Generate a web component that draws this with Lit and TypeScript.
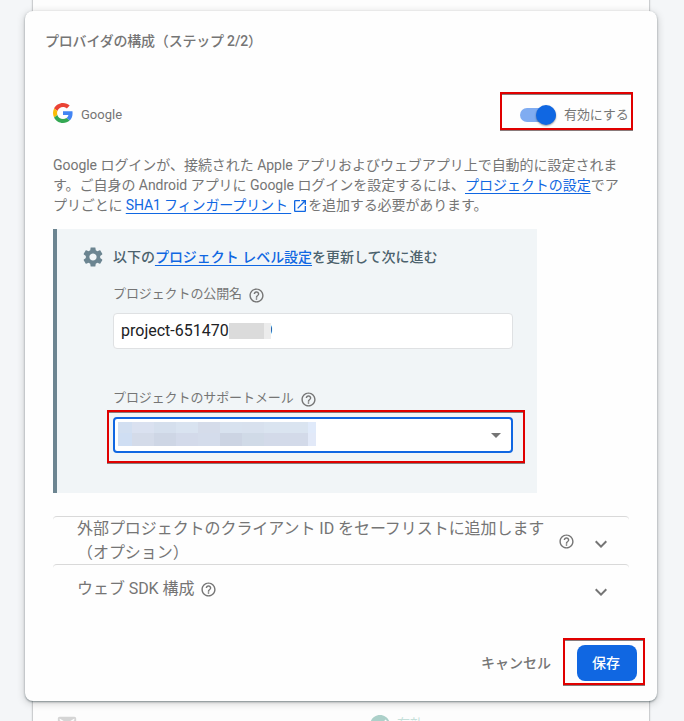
import { LitElement, html, css } from "lit";
import { customElement, property } from "lit/decorators.js";

const ICONS: Record<string, string> = {
  help: "M11 18h2v-2h-2v2zm1-16C6.48 2 2 6.48 2 12s4.48 10 10 10 10-4.48 10-10S17.52 2 12 2zm0 18c-4.41 0-8-3.59-8-8s3.59-8 8-8 8 3.59 8 8-3.59 8-8 8zm0-14c-2.21 0-4 1.79-4 4h2c0-1.1.9-2 2-2s2 .9 2 2c0 2-3 1.75-3 5h2c0-2.25 3-2.5 3-5 0-2.21-1.79-4-4-4z",
  gear: "M19.14 12.94c.04-.3.06-.61.06-.94 0-.32-.02-.64-.07-.94l2.03-1.58c.18-.14.23-.41.12-.61l-1.92-3.32c-.12-.22-.37-.29-.59-.22l-2.39.96c-.5-.38-1.03-.7-1.62-.94l-.36-2.54c-.04-.24-.24-.41-.48-.41h-3.84c-.24 0-.43.17-.47.41l-.36 2.54c-.59.24-1.13.57-1.62.94l-2.39-.96c-.22-.08-.47 0-.59.22L2.74 8.87c-.12.21-.08.47.12.61l2.03 1.58c-.05.3-.09.63-.09.94s.02.64.07.94l-2.03 1.58c-.18.14-.23.41-.12.61l1.92 3.32c.12.22.37.29.59.22l2.39-.96c.5.38 1.03.7 1.62.94l.36 2.54c.05.24.24.41.48.41h3.84c.24 0 .44-.17.47-.41l.36-2.54c.59-.24 1.13-.56 1.62-.94l2.39.96c.22.08.47 0 .59-.22l1.92-3.32c.12-.22.07-.47-.12-.61l-2.01-1.58zM12 15.6c-1.98 0-3.6-1.62-3.6-3.6s1.62-3.6 3.6-3.6 3.6 1.62 3.6 3.6-1.62 3.6-3.6 3.6z",
  open: "M19 19H5V5h7V3H5c-1.11 0-2 .9-2 2v14c0 1.1.89 2 2 2h14c1.1 0 2-.9 2-2v-7h-2v7zM14 3v2h3.59l-9.83 9.83 1.41 1.41L19 6.41V10h2V3h-7z",
  drop: "M7 10l5 5 5-5z",
  expand: "M7.41 8.59 12 13.17l4.59-4.58L18 10l-6 6-6-6z",
  mail: "M20 4H4c-1.1 0-1.99.9-1.99 2L2 18c0 1.1.9 2 2 2h16c1.1 0 2-.9 2-2V6c0-1.1-.9-2-2-2zm0 4l-8 5-8-5V6l8 5 8-5v2z",
  check: "M12 2C6.48 2 2 6.48 2 12s4.48 10 10 10 10-4.48 10-10S17.52 2 12 2zm-2 15l-5-5 1.41-1.41L10 14.17l7.59-7.59L19 8l-9 9z",
};

@customElement("ui-icon")
export class UiIcon extends LitElement {
  @property() name = "help";
  static styles = css`
    :host { display: inline-block; width: 17px; height: 17px; flex: none; }
    svg { display: block; width: 100%; height: 100%; fill: currentColor; }
  `;
  render() {
    return html`<svg viewBox="0 0 24 24"><path d=${ICONS[this.name]}></path></svg>`;
  }
}

const MOSAIC = [
  ["#d2dff1", "#dae1f0", "#d5dfed", "#d9e3f0", "#d5dcea", "#d8e2ef", "#d8e1ee", "#dae4f0", "#dae4f0", "#e0eafa"],
  ["#cfdef3", "#d4dbe9", "#ced6e5", "#d3daea", "#d4dceb", "#ccd4e3", "#d0dae7", "#d3dae9", "#d3dae9", "#e2e9f8"],
];

@customElement("app-root")
export class AppRoot extends LitElement {
  static styles = css`
    :host {
      display: block; position: relative; width: 684px; height: 721px; overflow: hidden;
      box-sizing: border-box; padding: 11px 0 0 25px; background: #f4f6f8; color: #757575;
      font: 14px/20px Roboto, "Noto Sans CJK JP", sans-serif;
    }
    * { box-sizing: border-box; }
    .page {
      position: absolute; left: 33px; top: -30px; width: 616px; height: 790px;
      background: #fdfdfd; box-shadow: 0 0 2px rgba(0, 0, 0, .5); color: #c6c6c6;
      display: flex; flex-direction: column; justify-content: space-between;
      padding: 13px 0 25px 25px; font-size: 13px;
    }
    .cols { display: grid; grid-template-columns: 310px 1fr; height: 20px; }
    .bottom { height: 24px; align-items: center; }
    .mail { width: 22px; height: 22px; margin-left: -2px; color: #d5d5d5; }
    .status { display: flex; align-items: center; gap: 5px; color: #acd0c9; }
    .status ui-icon { width: 24px; height: 24px; margin-top: 2px; }
    .status-label { color: #c4dfd9; }
    .dialog {
      position: relative; width: 632px; height: 690px; background: #fefefe; border-radius: 8px;
      box-shadow: 0 1px 2px rgba(40, 60, 65, .5), 0 2px 8px rgba(0, 0, 0, .2);
      padding: 20px 28px 0; display: flex; flex-direction: column;
    }
    .title { margin: 0 0 0 -8px; font-size: 14px; line-height: 20px; font-weight: 500; letter-spacing: -.2px; white-space: nowrap; }
    .provider { display: flex; align-items: center; height: 38px; margin-top: 41px; }
    .logo { width: 20px; height: 20px; margin-top: 3px; }
    .provider-name { margin: 7px 0 0 8px; font-size: 13px; }
    .mark { position: relative; }
    .mark::after {
      content: ""; position: absolute; inset: var(--inset, 0); border: 2px solid #e00000;
      filter: drop-shadow(0 1px 0 #8a7a7a); pointer-events: none;
    }
    .enable { display: flex; align-items: center; width: 133px; height: 38px; margin-left: auto; padding: 7px 0 0 20px; margin-right: -4px; white-space: nowrap; font-size: 13px; letter-spacing: -.1px; }
    .toggle { width: 36px; height: 14px; border-radius: 7px; background: #80acf1; margin-right: 8px; display: flex; align-items: center; justify-content: flex-end; }
    .knob { width: 20px; height: 20px; border-radius: 50%; background: #1067e2; box-shadow: 0 1px 2px rgba(0, 0, 0, .4); flex: none; }
    .desc { margin-top: 25px; white-space: nowrap; font-size: 14px; line-height: 20px; height: 60px; letter-spacing: -.035px; }
    .desc div { height: 20px; }
    .link { color: #1067e2; text-decoration: underline; text-underline-offset: 3px; text-decoration-thickness: 1px; }
    .desc .tight { letter-spacing: -.12px; }
    .desc ui-icon { width: 16px; height: 16px; color: #1067e2; vertical-align: -4px; margin: 0 0 0 1px; }
    .panel { width: 484px; height: 264px; margin-top: 14px; background: #f1f5f7; border-left: 4px solid #6c8591; padding: 16px 24px 0 24px; }
    .panel-head { display: flex; align-items: center; height: 24px; gap: 8px; color: #4c626d; font-weight: 500; white-space: nowrap; letter-spacing: -.03px; }
    .gear { width: 24px; height: 24px; color: #6c8591; }
    .field { margin-left: 32px; width: 400px; }
    .label { display: flex; align-items: center; height: 20px; font-size: 13px; letter-spacing: -.1px; gap: 6px; white-space: nowrap; }
    .label ui-icon { margin-top: 3px; }
    .first { margin-top: 15px; }
    .second { margin-top: 39px; }
    .input { margin-top: 9px; height: 36px; border: 1px solid #dfe1e3; border-radius: 4px; background: #fff; color: #202124; display: flex; align-items: center; padding-left: 7px; font-size: 16px; }
    .input-text { position: relative; }
    .last { margin-left: 35px; }
    .redact { position: absolute; left: 108px; top: 2px; width: 42px; height: 16px; background: linear-gradient(90deg, #dbdbdb 35px, #ececec 35px); }
    .select { margin-top: 9px; height: 36px; border: 2px solid #1067e2; border-radius: 4px; background: #fff; display: flex; align-items: center; padding: 0 3px; --inset: -9px -14px -12px -8px; }
    .mosaic { display: grid; grid-template-columns: 14px repeat(8, 22px) 8px; grid-template-rows: 11px 13px; margin-top: -2px; }
    .drop { width: 24px; height: 24px; margin-left: auto; }
    .exp { width: 576px; height: 48px; border-top: 1px solid #d9d9d9; border-radius: 4px; display: flex; align-items: center; padding: 0 16px 0 24px; font-size: 16px; letter-spacing: -.06px; line-height: 24px; white-space: nowrap; }
    .exp.one { margin-top: 23px; }
    .exp-title { flex: none; height: 48px; }
    .exp.two .exp-title { height: 24px; }
    .exp.one .tip { margin-left: 14px; margin-top: 1px; }
    .exp.two .tip { margin-left: 6px; margin-top: 1px; }
    .chev { width: 24px; height: 24px; margin-left: auto; margin-top: 7px; }
    .actions { display: flex; align-items: center; justify-content: flex-end; height: 36px; margin-top: 33px; margin-right: -8px; gap: 26px; font-weight: 500; }
    .cancel { margin-bottom: 1px; }
    .save { --inset: -7px -8px -4px -14px; width: 60px; height: 36px; padding: 0 2px 1px 0; border-radius: 8px; background: #1067e2; color: #fff; display: flex; align-items: center; justify-content: center; }
  `;

  render() {
    return html`
      <div class="page">
        <div class="cols"><span>プロバイダ</span><span>ステータス</span></div>
        <div class="cols bottom">
          <ui-icon class="mail" name="mail"></ui-icon>
          <span class="status"><ui-icon name="check"></ui-icon><span class="status-label">有効</span></span>
        </div>
      </div>
      <section class="dialog">
        <h1 class="title">プロバイダの構成（ステップ 2/2）</h1>
        <div class="provider">
          <svg class="logo" viewBox="0 0 48 48">
            <path fill="#EA4335" d="M24 9.5c3.54 0 6.71 1.22 9.21 3.6l6.85-6.85C35.9 2.38 30.47 0 24 0 14.62 0 6.51 5.38 2.56 13.22l7.98 6.19C12.43 13.72 17.74 9.5 24 9.5z"></path>
            <path fill="#4285F4" d="M46.98 24.55c0-1.57-.15-3.09-.38-4.55H24v9.02h12.94c-.58 2.96-2.26 5.48-4.78 7.18l7.73 6c4.51-4.18 7.09-10.36 7.09-17.65z"></path>
            <path fill="#FBBC05" d="M10.53 28.59c-.48-1.45-.76-2.99-.76-4.59s.27-3.14.76-4.59l-7.98-6.19C.92 16.46 0 20.12 0 24c0 3.88.92 7.54 2.56 10.78l7.97-6.19z"></path>
            <path fill="#34A853" d="M24 48c6.48 0 11.93-2.13 15.89-5.81l-7.73-6c-2.15 1.45-4.92 2.3-8.16 2.3-6.26 0-11.57-4.22-13.47-9.91l-7.98 6.19C6.51 42.62 14.62 48 24 48z"></path>
          </svg>
          <span class="provider-name">Google</span>
          <div class="enable mark"><span class="toggle"><span class="knob"></span></span><span>有効にする</span></div>
        </div>
        <div class="desc">
          <div>Google ログインが、接続された Apple アプリおよびウェブアプリ上で自動的に設定されま</div>
          <div>す。ご自身の Android アプリに Google ログインを設定するには、<span class="link">プロジェクトの設定</span>でア</div>
          <div class="tight">プリごとに <span class="link">SHA1 フィンガープリント&nbsp;</span><ui-icon name="open"></ui-icon>を追加する必要があります。</div>
        </div>
        <div class="panel">
          <div class="panel-head"><ui-icon class="gear" name="gear"></ui-icon><span>以下の<span class="link">プロジェクト レベル設定</span>を更新して次に進む</span></div>
          <div class="field first">
            <div class="label"><span>プロジェクトの公開名</span><ui-icon></ui-icon></div>
            <div class="input"><span class="input-text">project-651470<span class="last">9</span><span class="redact"></span></span></div>
          </div>
          <div class="field second">
            <div class="label"><span>プロジェクトのサポートメール</span><ui-icon></ui-icon></div>
            <div class="select mark">
              <div class="mosaic">${MOSAIC.flat().map((c) => html`<span style="background:${c}"></span>`)}</div>
              <ui-icon class="drop" name="drop"></ui-icon>
            </div>
          </div>
        </div>
        <div class="exp one">
          <div class="exp-title">外部プロジェクトのクライアント ID をセーフリストに追加します<br />（オプション）</div>
          <ui-icon class="tip"></ui-icon><ui-icon class="chev" name="expand"></ui-icon>
        </div>
        <div class="exp two">
          <div class="exp-title">ウェブ SDK 構成</div>
          <ui-icon class="tip"></ui-icon><ui-icon class="chev" name="expand"></ui-icon>
        </div>
        <div class="actions"><span class="cancel">キャンセル</span><div class="save mark">保存</div></div>
      </section>
    `;
  }
}
